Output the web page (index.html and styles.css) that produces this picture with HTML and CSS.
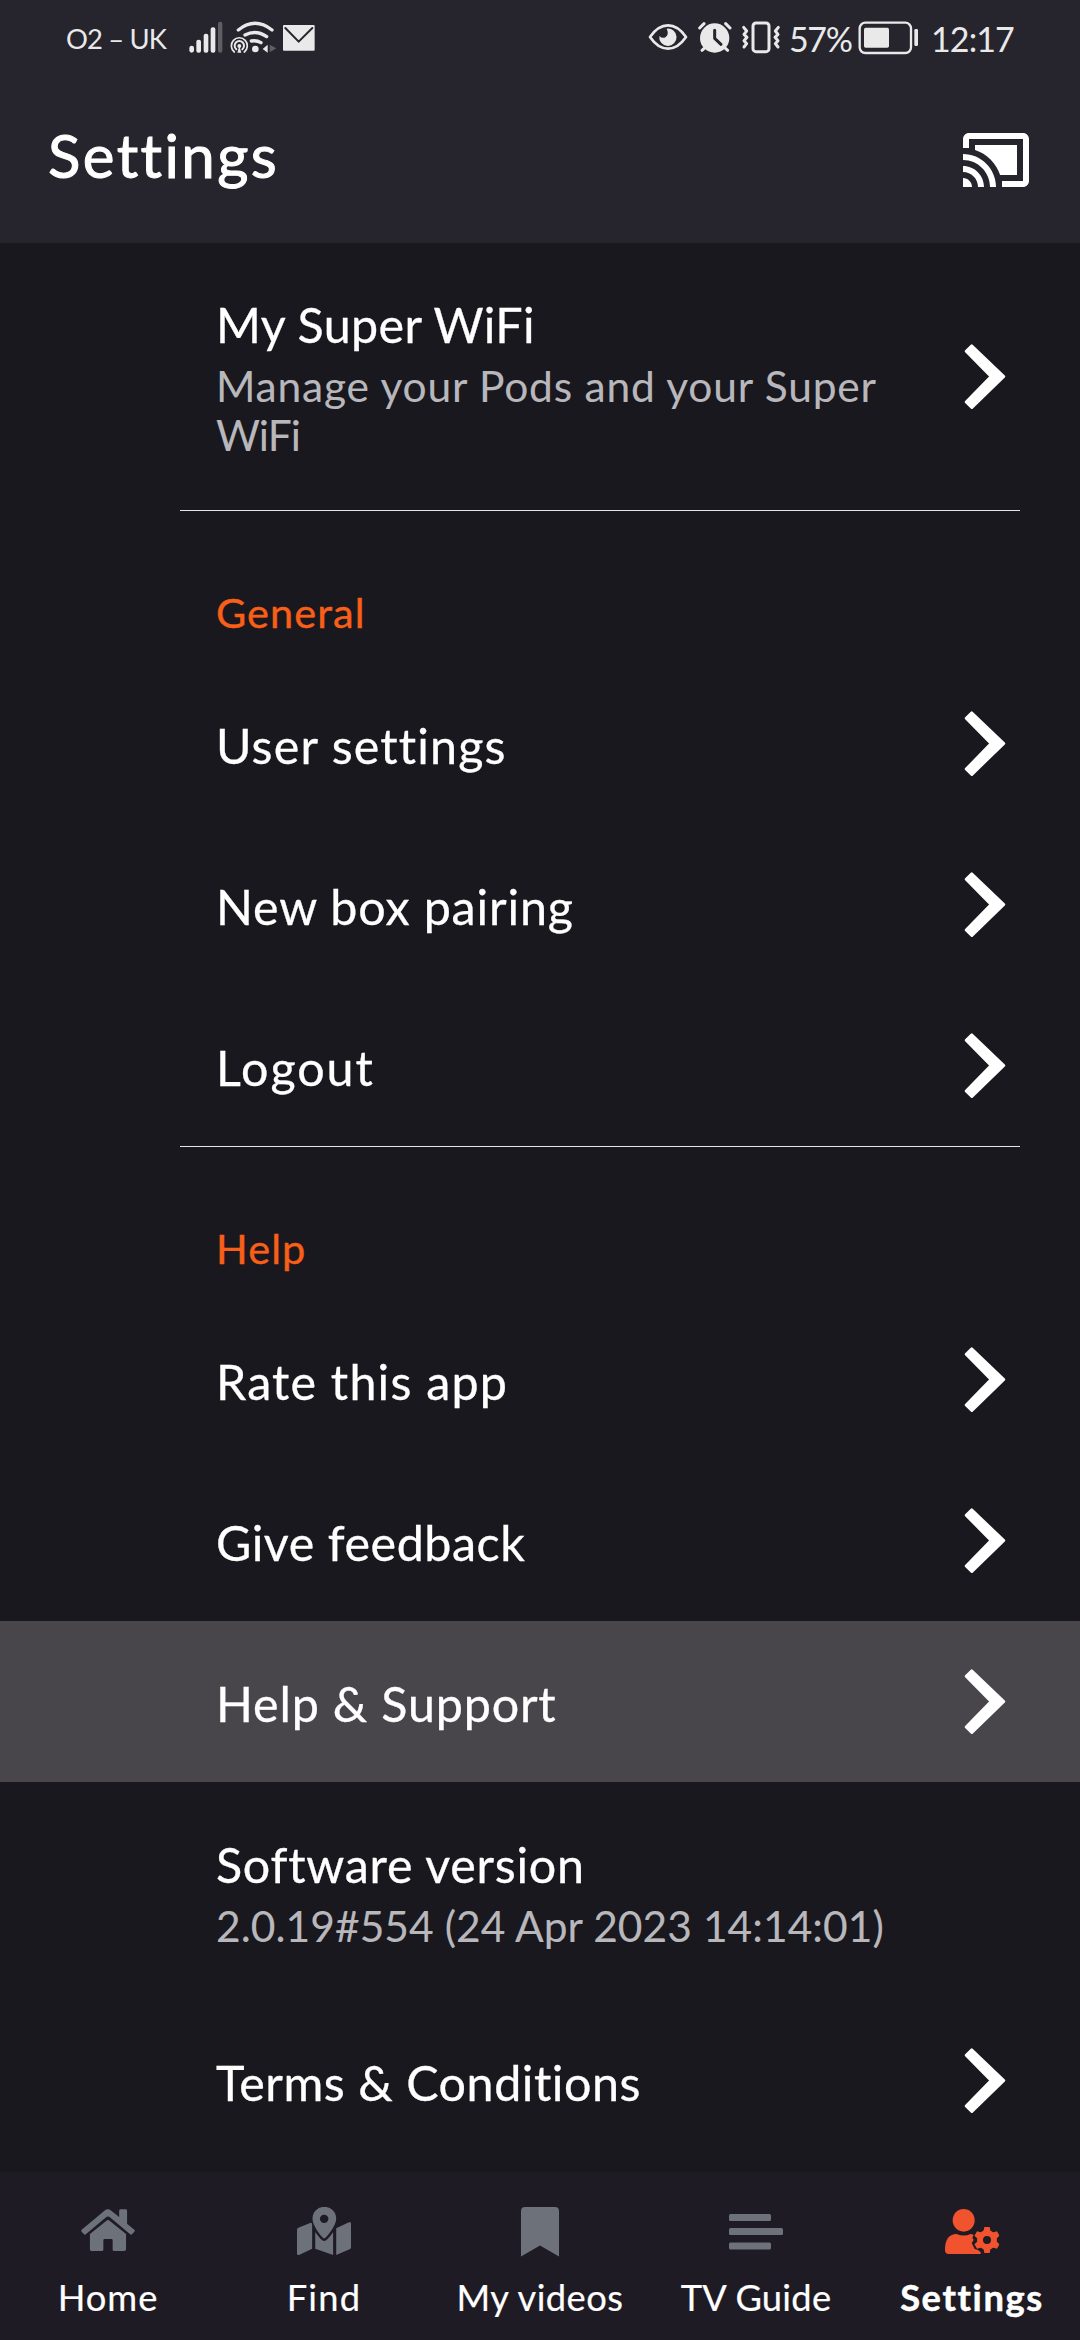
FILE: index.html
```html
<!DOCTYPE html>
<html lang="en">
<head>
<meta charset="utf-8">
<title>Settings</title>
<link rel="stylesheet" href="styles.css">
</head>
<body>
<svg class="defs" width="0" height="0">
  <symbol id="chevron" viewBox="73 90 124 196"><path d="M95 95 78 112 153 188 78 265 95 282 192 188Z" stroke="#fff" stroke-width="8" stroke-linejoin="round"/></symbol>
</svg>
<div class="screen">
  <header class="top">
    <div class="status">
      <span class="carrier">O2 – UK</span>
      <svg class="signal" viewBox="27 0 102 150"><g><rect x="28" y="107" width="14" height="21" rx="7"/><rect x="49" y="89" width="14" height="39" rx="6"/><rect x="71" y="71" width="14" height="57" rx="6"/><rect x="92" y="52" width="14" height="76" rx="6"/></g><rect class="dim" x="114" y="35" width="13" height="93" rx="6"/></svg>
      <svg class="wifi" viewBox="150 0 141 150"><g class="line" stroke-width="10"><path d="M175 60Q225 20 276 60"/><path d="M195 75Q228 58 260 80"/><path d="M214 93Q230 90 243 98"/></g><circle cx="226" cy="117" r="10"/><g class="line" stroke-width="5"><path d="M163 126A24 24 0 1 1 193 126"/><path d="M169 118A14 14 0 1 1 187 118" stroke-width="6"/></g><circle cx="178" cy="108" r="6"/><path d="M178 108 172 128H184Z"/><path d="M248 117 263 104V128Z"/><path class="dim" d="M269 104 289 115 269 127Z"/></svg>
      <svg class="mail" viewBox="309 0 96 150"><rect x="309" y="45" width="95" height="77" rx="3"/><path class="cut" d="M316 54 356 95 397 54" stroke-width="6"/></svg>
      <svg class="eye" viewBox="54 30 120 150"><path class="line" stroke-width="8" d="M60 111Q84 76 114 76T168 111Q144 146 114 146T60 111Z"/><path d="M110 86A26 26 0 1 1 88 108Q98 118 108 110T110 86Z"/></svg>
      <svg class="alarm" viewBox="204 30 102 150"><circle cx="254" cy="114" r="44"/><g class="line" stroke-width="9"><path d="M209 84 222 71M300 84 287 71"/><path d="M226 142 216 151M283 142 293 151"/></g><path class="cut" d="M254 91V115L273 133" stroke-width="9"/></svg>
      <svg class="vibrate" viewBox="333 30 120 150"><rect class="line" x="369" y="69" width="48" height="86" rx="9" stroke-width="9"/><g class="line" stroke-width="9"><path d="M341 82 350 93 342 103 351 112 342 122 350 131 342 141"/><path d="M445 82 436 93 444 103 435 112 444 122 436 131 444 141"/></g></svg>
      <span class="percent">57%</span>
      <svg class="battery" viewBox="684 30 186 150"><rect class="line" x="689" y="68" width="154" height="91" rx="17" stroke-width="7"/><rect x="702" y="83" width="75" height="60" rx="5"/><rect x="853" y="87" width="11" height="51" rx="4"/></svg>
      <span class="clock">12:17</span>
    </div>
    <div class="appbar">
      <h1>Settings</h1>
      <svg class="cast" viewBox="1 3 22 18"><path d="M1 18v3h3c0-1.66-1.34-3-3-3zm0-4v2c2.76 0 5 2.24 5 5h2c0-3.87-3.13-7-7-7zm18-7H5v1.63c3.96 1.28 7.09 4.41 8.37 8.37H19V7zM1 10v2c4.97 0 9 4.03 9 9h2c0-6.08-4.93-11-11-11zm20-7H3c-1.1 0-2 .9-2 2v3h2V5h18v14h-7v2h7c1.1 0 2-.9 2-2V5c0-1.1-.9-2-2-2z"/></svg>
    </div>
  </header>

  <main class="list">
    <div class="row row-wifi">
      <div class="text"><div class="title t-wifi">My Super WiFi</div><div class="sub t-pods">Manage your Pods and your Super <span class="t-tail">WiFi</span></div></div>
      <svg class="chevron"><use href="#chevron"/></svg>
    </div>
    <section class="group">
      <h2 class="t-general">General</h2>
      <div class="row"><div class="title t-user">User settings</div><svg class="chevron"><use href="#chevron"/></svg></div>
      <div class="row"><div class="title t-pairing">New box pairing</div><svg class="chevron"><use href="#chevron"/></svg></div>
      <div class="row"><div class="title t-logout">Logout</div><svg class="chevron"><use href="#chevron"/></svg></div>
    </section>
    <section class="group">
      <h2 class="t-help">Help</h2>
      <div class="row"><div class="title t-rate">Rate this app</div><svg class="chevron"><use href="#chevron"/></svg></div>
      <div class="row"><div class="title t-feedback">Give feedback</div><svg class="chevron"><use href="#chevron"/></svg></div>
      <div class="row pressed"><div class="title t-support">Help &amp; Support</div><svg class="chevron"><use href="#chevron"/></svg></div>
      <div class="row row-version"><div class="text"><div class="title t-software">Software version</div><div class="sub t-version">2.0.19#554 (24 Apr 2023 14:14:01)</div></div></div>
      <div class="row"><div class="title t-terms">Terms &amp; Conditions</div><svg class="chevron"><use href="#chevron"/></svg></div>
    </section>
  </main>

  <nav class="tabs">
    <a class="tab"><svg class="tab-icon" viewBox="235 141 157 150" preserveAspectRatio="none"><path d="M237 209 303 152Q313 144 323 152L346 171V152Q346 148 350 148H365Q369 148 369 152V191L390 209Q393 212 390 215L384 222Q381 226 378 223L319 172Q313 167 308 172L249 223Q246 226 243 222L237 215Q234 212 237 209Z"/><path d="M261 222 309 182Q313 178 318 182L366 222V268Q366 273 361 273H331Q327 273 327 269V241Q327 237 323 237H304Q300 237 300 241V269Q300 273 296 273H265Q261 273 261 268Z"/></svg><span class="t-home">Home</span></a>
    <a class="tab"><svg class="tab-icon" viewBox="862 141 157 150" preserveAspectRatio="none"><path d="M866 203 900 189Q906 187 906 193V266L868 285Q862 286 862 281V209Q862 205 866 203ZM915 216Q933 243 941 243T967 217V285L915 266ZM976 205 1013 187Q1019 185 1019 190V262Q1019 266 1015 268L976 285Z"/><path fill-rule="evenodd" d="M938 234C930 226 907 196 907 176A34.500 35.500 0 0 1 976 176C976 196 952 226 944 234Q941 236 938 234ZM941 164A12 12 0 1 0 941 189A12 12 0 1 0 941 164Z"/></svg><span class="t-find">Find</span></a>
    <a class="tab"><svg class="tab-icon mark" viewBox="0 0 38 50"><path d="M0 49.500V4Q0 0 4 0H34Q38 0 38 4V49.500L19 38.500Z"/></svg><span class="t-videos">My videos</span></a>
    <a class="tab"><svg class="tab-icon" viewBox="0 0 54 50"><rect y="7" width="42" height="7" rx="1.500"/><rect y="21" width="54" height="7" rx="1.500"/><rect y="35.500" width="42" height="7" rx="1.500"/></svg><span class="t-guide">TV Guide</span></a>
    <a class="tab active"><svg class="tab-icon" viewBox="45 51 162 150"><ellipse cx="101" cy="91" rx="33" ry="34"/><path d="M45 180C45 150 55 133 80 132Q101 141 122 132L131 134 127 143 131 150 125 159 134 177 144 180 152 187V192H56Q45 192 45 180Z"/><circle cx="171" cy="150" r="21" fill="none" stroke="#f2532f" stroke-width="18"/><g><path d="M160 126 163 111H179L182 126ZM160 174 163 189H179L182 174Z"/><path d="M160 126 163 111H179L182 126ZM160 174 163 189H179L182 174Z" transform="rotate(60 171 150)"/><path d="M160 126 163 111H179L182 126ZM160 174 163 189H179L182 174Z" transform="rotate(120 171 150)"/></g></svg><span class="t-active">Settings</span></a>
  </nav>
</div>
</body>
</html>
```
FILE: styles.css
```css
* { box-sizing: border-box; }
body { margin: 0; background: #19181e; color: #fff; font-family: Lato, "Open Sans", sans-serif; }
svg { display: block; flex: none; fill: currentColor; }
h1, h2 { margin: 0; font-weight: 400; }
.defs { position: absolute; }
.screen { display: flex; flex-direction: column; width: 1080px; height: 2340px; overflow: hidden; }

/* status bar */
.top { height: 243px; background: #26242c; }
.status { display: flex; align-items: center; height: 70px; padding-left: 66px; color: #e9e9ea; white-space: nowrap; }
.status svg { height: 50px; }
.status .line { fill: none; stroke: currentColor; stroke-linecap: round; stroke-linejoin: round; }
.status .cut { fill: none; stroke: #26242c; stroke-linecap: round; stroke-linejoin: round; }
.status .dim { fill: #605e65; }
.carrier { width: 123px; padding-top: 7px; font-size: 27.4px; letter-spacing: -0.85px; }
.signal { width: 34px; }
.wifi { width: 47px; margin-left: 7px; }
.mail { width: 32px; margin-left: 6px; }
.eye { width: 40px; margin-left: 333px; }
.alarm { width: 34px; margin-left: 10px; }
.vibrate { width: 40px; margin-left: 9px; }
.percent { width: 69px; margin-left: 8px; padding-top: 6px; font-size: 34px; letter-spacing: -1.4px; }
.battery { width: 62px; }
.clock { padding: 6px 0 0 11px; font-size: 34px; letter-spacing: -0.9px; }

/* app bar */
.appbar { display: flex; align-items: center; justify-content: space-between; height: 173px; padding: 6px 51px 0 48px; }
.appbar h1 { padding-bottom: 10px; font-size: 60px; letter-spacing: 2.4px; -webkit-text-stroke: 1px currentColor; }
.cast { width: 66px; height: 54px; }

/* settings list */
.list { flex: 1; overflow: hidden; }
.row { display: flex; align-items: center; justify-content: space-between; height: 161px; padding: 0 74px 0 216px; }
.row > .title { padding-top: 4px; }
.row-wifi { height: 267px; }
.row-version { height: 218px; }
.row-wifi .text, .row-version .text { align-self: flex-start; padding-top: 53px; }
.row-version .text { padding-top: 54px; }
.text .title { height: 65px; }
.text { width: 700px; }
.title { font-size: 48.4px; line-height: 57px; -webkit-text-stroke: 0.3px currentColor; white-space: nowrap; }
.sub { color: #b8b7bb; font-size: 42.5px; line-height: 49px; -webkit-text-stroke: 0.1px currentColor; }
.chevron { width: 42px; height: 65px; }
.pressed { background: #48454b; }
.group::before { content: ""; display: block; height: 1px; margin: 0 60px 0 180px; background: #e6e6e8; }
.group h2 { height: 152px; padding: 76px 0 0 216px; color: #f85f18; font-size: 41.5px; line-height: 50px; -webkit-text-stroke: 0.4px currentColor; }
.t-wifi { letter-spacing: 0.35px; }
.t-pods { letter-spacing: 0.8px; }
.t-tail { letter-spacing: -1px; }
.t-general { letter-spacing: 1.05px; }
.t-user { letter-spacing: 1.15px; }
.t-pairing { letter-spacing: 0.85px; }
.t-logout { letter-spacing: 2px; }
.t-help { letter-spacing: 1.1px; }
.t-rate { letter-spacing: 1.2px; }
.t-feedback { letter-spacing: 0.55px; }
.t-support { letter-spacing: 0.83px; }
.t-software { letter-spacing: 0.75px; }
.t-version { letter-spacing: 0.05px; }
.t-terms { letter-spacing: 0.55px; }

/* bottom tabs */
.tabs { display: flex; height: 168px; background: #1e1b24; }
.tab { display: flex; flex: 1; flex-direction: column; align-items: center; padding-top: 35px; font-size: 36.3px; line-height: 44px; white-space: nowrap; -webkit-text-stroke: 0.2px currentColor; }
.tab-icon { width: 54px; height: 50px; margin-bottom: 18px; color: #6d7179; -webkit-text-stroke: 0; }
.mark { width: 38px; }
.active { font-weight: 700; -webkit-text-stroke: 0.5px currentColor; }
.active .tab-icon { color: #f2532f; }
.t-home { letter-spacing: 0.97px; }
.t-find { letter-spacing: 1.2px; }
.t-videos { letter-spacing: 0.46px; }
.t-guide { letter-spacing: 0.25px; }
.t-active { letter-spacing: 1.6px; }
```
